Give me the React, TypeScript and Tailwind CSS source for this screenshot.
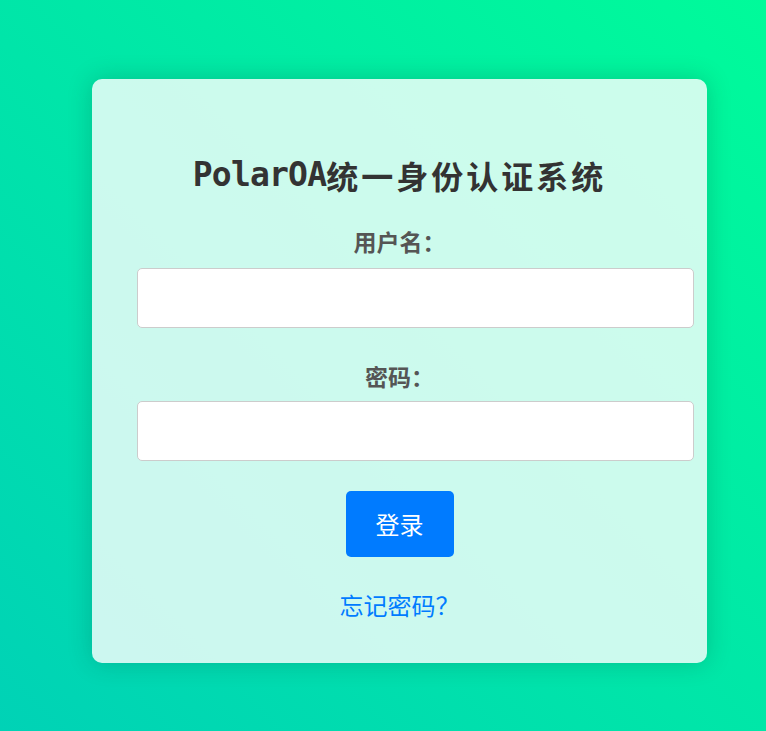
import React from "react";

export default function App() {
  return (
    <div className="min-h-[731px] w-full bg-[linear-gradient(45deg,#00d2b6,#00fb9a)] pl-[92px] pt-[79px] font-['Noto_Sans_CJK_SC',sans-serif]">
      <div className="flex w-[615px] flex-col items-center rounded-[10px] bg-white/80 px-[45px] pb-[40px] pt-[76px] shadow-[0_0_24px_rgba(0,60,40,0.22)]">
        <h2 className="flex h-[40px] items-center whitespace-nowrap text-[#333]">
          <span className="font-['DejaVu_Sans_Mono',monospace] text-[33px] font-bold tracking-[-0.8px]">PolarOA</span>
          <span className="font-['Noto_Sans_CJK_SC',sans-serif] text-[32px] font-bold tracking-[3px]">统一身份认证系统</span>
        </h2>
        <label className="mt-[32px] h-[28px] text-[23px] font-bold leading-[28px] text-[#555]">用户名：</label>
        <input
          type="text"
          className="mt-[13px] box-border h-[60px] w-[557px] shrink-0 self-start rounded-[5px] border border-[#ccc] bg-white px-[15px] outline-none"
        />
        <label className="mt-[34px] h-[28px] text-[23px] font-bold leading-[28px] text-[#555]">密码：</label>
        <input
          type="password"
          className="mt-[11px] box-border h-[60px] w-[557px] shrink-0 self-start rounded-[5px] border border-[#ccc] bg-white px-[15px] outline-none"
        />
        <button className="mt-[30px] flex h-[66px] w-[108px] items-center justify-center rounded-[5px] bg-[#007bff] text-[24px] text-white">
          登录
        </button>
        <a href="#" className="mt-[30px] h-[36px] text-[24px] leading-[36px] text-[#007bff]">
          忘记密码？
        </a>
      </div>
    </div>
  );
}
